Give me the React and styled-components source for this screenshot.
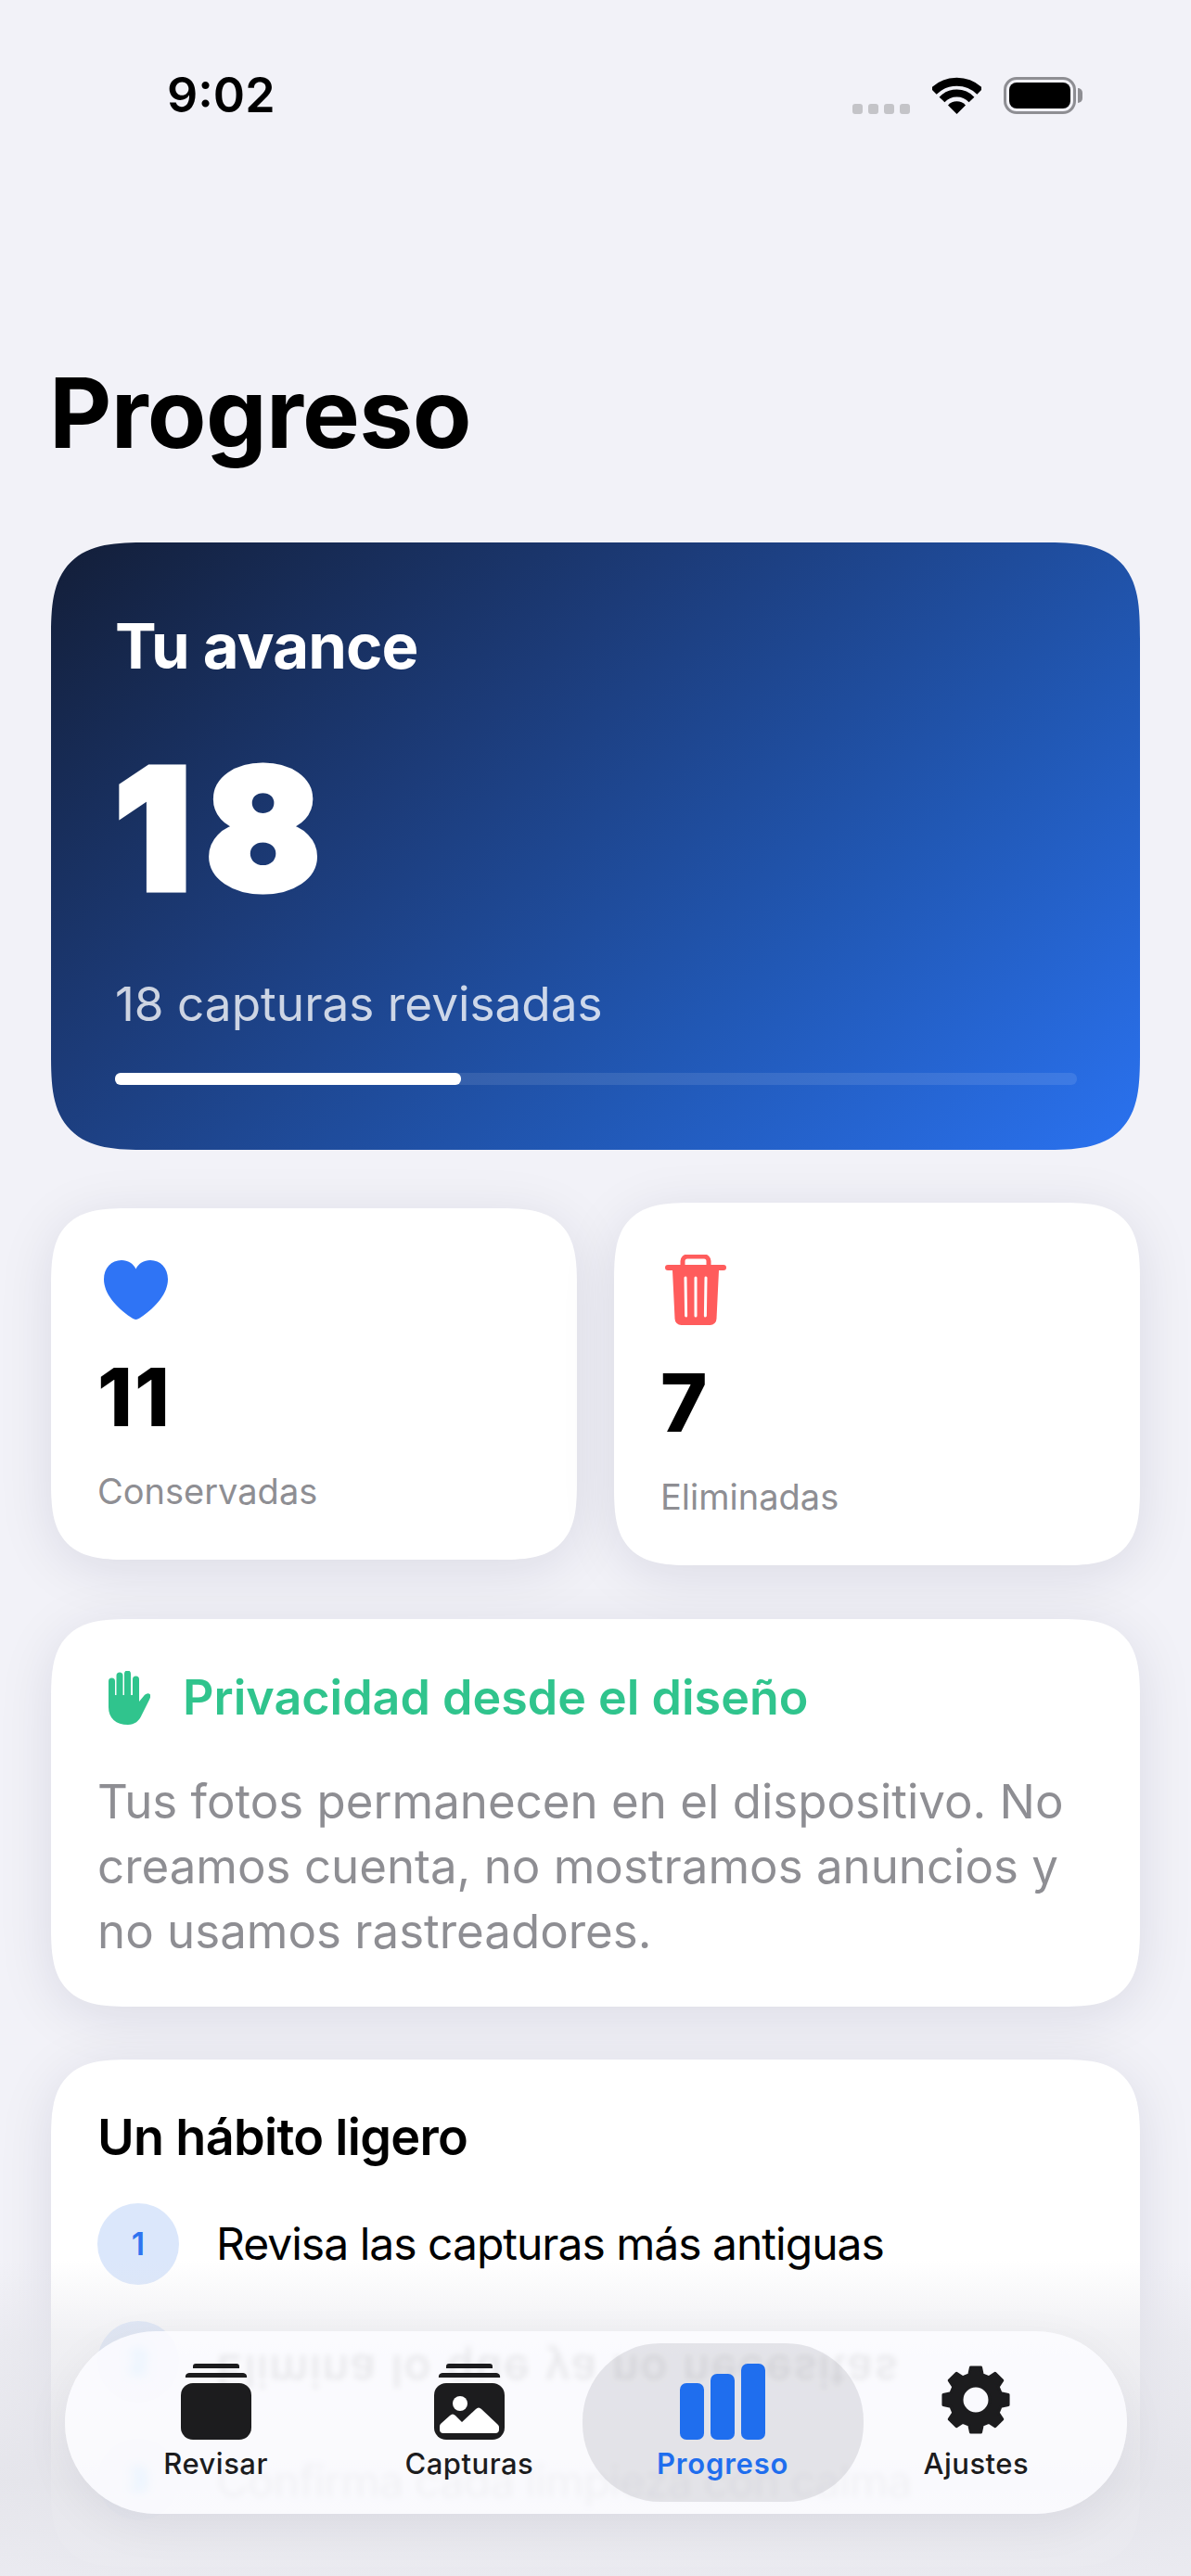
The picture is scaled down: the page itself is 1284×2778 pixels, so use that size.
import React from "react"
import styled, { createGlobalStyle, css } from "styled-components"

const GlobalStyle = createGlobalStyle`
	html, body {
		margin: 0;
		padding: 0;
		background: #f2f2f8;
	}
	* {
		box-sizing: border-box;
	}
`

// continuous iOS corners where the browser can do them
const smoothCorners = (plain, smooth) => css`
	border-radius: ${plain}px;
	@supports (corner-shape: squircle) {
		border-radius: ${smooth}px;
		corner-shape: superellipse(1.6);
	}
`

const Screen = styled.div`
	position: relative;
	width: 1284px;
	height: 2778px;
	overflow: hidden;
	background: #f2f2f8;
	font-family: Inter, "Liberation Sans", sans-serif;
	color: #000;
`

const Content = styled.main`
	display: flex;
	flex-direction: column;
	padding: 0 55px;
`

const StatusBar = styled.header`
	display: flex;
	justify-content: space-between;
	align-items: flex-start;
	height: 383px;
	padding: 73px 69px 0 125px;
`

const Clock = styled.span`
	font-size: 52px;
	line-height: 60px;
	font-weight: 600;
`

const StatusIcons = styled.div`
	display: flex;
	align-items: flex-end;
	margin-top: 10px;
`

const SignalDots = styled.div`
	display: flex;
	gap: 6px;
	margin-right: 24px;
`

const SignalDot = styled.i`
	display: block;
	width: 11px;
	height: 11px;
	border-radius: 3px;
	background: #c4c4c8;
`

const Battery = styled.div`
	position: relative;
	width: 78px;
	height: 40px;
	margin-left: 24px;
	padding: 3px;
	border: 3px solid #8e8e93;
	border-radius: 14px;

	&::before {
		content: "";
		display: block;
		height: 100%;
		border-radius: 8px;
		background: #000;
	}

	&::after {
		content: "";
		position: absolute;
		top: 9px;
		right: -10px;
		width: 5px;
		height: 16px;
		border-radius: 0 6px 6px 0;
		background: #8e8e93;
	}
`

const Title = styled.h1`
	margin: 0 0 78px -2px;
	font-size: 104px;
	line-height: 124px;
	font-weight: 700;
	letter-spacing: -0.7px;
`

const Hero = styled.section`
	padding: 72px 68px 70px 69px;
	${smoothCorners(78, 104)}
	color: #fff;
	background: linear-gradient(140deg, #131e38 0%, #1c3b78 35%, #2158b5 68%, #2a72f0 100%);
`

const HeroLabel = styled.h2`
	margin: 0;
	font-size: 67px;
	line-height: 80px;
	font-weight: 700;
	letter-spacing: -0.9px;
`

const HeroNumber = styled.div`
	margin-top: 62px;
	font-size: 180px;
	line-height: 190px;
	font-weight: 900;
	letter-spacing: 17px;
	-webkit-text-stroke: 7px #fff;
`

const HeroCaption = styled.p`
	margin: 63px 0 0;
	font-size: 51.3px;
	line-height: 60px;
	color: rgba(255, 255, 255, 0.78);
`

const Track = styled.div`
	height: 12.5px;
	margin-top: 45px;
	border-radius: 6px;
	background: rgba(255, 255, 255, 0.1);
`

const Fill = styled.div`
	height: 100%;
	border-radius: 6px;
	background: #fff;
`

const StatGrid = styled.div`
	display: grid;
	grid-template-columns: 1fr 1fr;
	gap: 40px;
	align-items: center;
	margin-top: 57px;
`

const Card = styled.section`
	background: #fff;
	${(p) => smoothCorners(p.$radius || 64, (p.$radius || 64) + 24)}
	box-shadow: 0 10px 60px rgba(20, 20, 60, 0.1);
`

const StatCard = styled(Card)`
	padding: 56px 50px 51px;
`

const StatIcon = styled.svg`
	display: block;
	margin-left: ${(p) => p.$inset}px;
`

const StatNumber = styled.div`
	margin-top: 34px;
	font-size: 86px;
	line-height: 100px;
	font-weight: 800;
	letter-spacing: 2px;
`

const StatLabel = styled.div`
	margin-top: 28px;
	font-size: 38px;
	line-height: 46px;
	color: #8e8e93;
`

const PrivacyCard = styled(Card)`
	margin-top: 58px;
	padding: 54px 50px 46px;
`

const PrivacyHead = styled.div`
	display: flex;
	align-items: center;
	gap: 35px;
	padding-left: 12px;
`

const PrivacyTitle = styled.h3`
	margin: 0;
	font-size: 52px;
	line-height: 62px;
	font-weight: 600;
	color: #30c48d;
`

const PrivacyBody = styled.p`
	margin: 46px 0 0;
	font-size: 51px;
	line-height: 70px;
	color: #8e8e93;
`

const HabitCard = styled(Card)`
	margin-top: 57px;
	padding: 52px 50px 50px;
`

const HabitTitle = styled.h3`
	margin: 0 0 39px;
	font-size: 54px;
	line-height: 64px;
	font-weight: 600;
	letter-spacing: -0.7px;
`

const HabitList = styled.ol`
	display: flex;
	flex-direction: column;
	gap: 39px;
	margin: 0;
	padding: 0;
	list-style: none;
`

const HabitRow = styled.li`
	display: flex;
	align-items: center;
	gap: 40px;
`

const HabitBadge = styled.span`
	display: flex;
	align-items: center;
	justify-content: center;
	flex: none;
	width: 88px;
	height: 88px;
	border-radius: 50%;
	background: #dbe7fb;
`

// rows under the tab bar show through the glass, blurred; the nearest one is flipped too
const behindGlass = css`
	position: relative;
	z-index: 1;
`

const HabitDigit = styled.span`
	font-size: 34px;
	font-weight: 600;
	color: #2f74f0;
	${(p) =>
		p.$glass &&
		css`
			${behindGlass}
			color: #149cf8;
			filter: blur(6px);
		`}
`

const HabitText = styled.span`
	font-size: 48px;
	line-height: 58px;
	letter-spacing: -1px;
	color: #000;
	${(p) =>
		p.$glass === "flipped" &&
		css`
			${behindGlass}
			transform: translateY(10px) scaleY(-1);
			filter: blur(3px);
			letter-spacing: 1.8px;
			opacity: 0.75;
		`}
	${(p) =>
		p.$glass === "faint" &&
		css`
			${behindGlass}
			transform: translateY(2px);
			filter: blur(3px);
			opacity: 0.3;
		`}
`

const BottomFade = styled.div`
	position: absolute;
	left: 0;
	right: 0;
	bottom: 0;
	height: 340px;
	background: linear-gradient(
		180deg,
		rgba(228, 228, 234, 0) 0%,
		rgba(228, 228, 234, 0.55) 25%,
		rgba(228, 228, 234, 0.9) 70%,
		rgba(234, 234, 240, 0.96) 100%
	);
	pointer-events: none;
`

const TabBar = styled.nav`
	position: absolute;
	z-index: 2;
	left: 70px;
	top: 2514px;
	display: grid;
	grid-template-columns: repeat(4, 1fr);
	align-items: center;
	width: 1145px;
	height: 197px;
	padding: 0 26px;
	border-radius: 98px;
	background: rgba(252, 252, 255, 0.88);
	box-shadow: 0 14px 50px rgba(20, 20, 50, 0.06);
`

const Tab = styled.div`
	display: flex;
	flex-direction: column;
	align-items: center;
	justify-content: center;
	height: 171px;
	margin: 0 ${(p) => (p.$active ? -15 : 0)}px;
	border-radius: 84px;
	background: ${(p) => (p.$active ? "rgba(110, 110, 125, 0.16)" : "transparent")};
	color: ${(p) => (p.$active ? "#1f6eee" : "#1c1c1e")};
`

const TabIcon = styled.svg`
	display: block;
	width: ${(p) => p.$width || 76}px;
	height: 82px;
	margin-bottom: 7px;
`

const TabLabel = styled.span`
	font-size: 31px;
	line-height: 38px;
	font-weight: ${(p) => (p.$active ? 600 : 500)};
	letter-spacing: ${(p) => (p.$active ? 0.8 : 0.5)}px;
`

const WifiIcon = () => (
	<svg width="53" height="40" viewBox="0 0 53 40" fill="none">
		<path d="M1.5 15.5A35.5 35.5 0 0 1 51.5 15.5" stroke="#000" strokeWidth="9" />
		<path d="M10.5 24.5A22 22 0 0 1 42.5 24.5" stroke="#000" strokeWidth="8" />
		<path d="M17 30.5A13 13 0 0 1 36 30.5L26.5 40Z" fill="#000" />
	</svg>
)

const HeartIcon = () => (
	<StatIcon $inset={7} width="69" height="64" viewBox="0 0 69 64">
		<path
			d="M34.5 64C33 64 31 63 29 61.5 13 50.500 0 36 0 20.500 0 8.500 8 0 19 0 26 0 31.500 3.500 34.500 9.500 37.500 3.500 43 0 50 0 61 0 69 8.500 69 20.500 69 36 56 50.500 40 61.500 38 63 36 64 34.500 64Z"
			fill="#2f74f5"
		/>
	</StatIcon>
)

const TrashIcon = () => (
	<StatIcon $inset={5} width="66" height="76" viewBox="0 0 66 76">
		<path d="M19 12V7a5 5 0 0 1 5-5h18a5 5 0 0 1 5 5v5" fill="none" stroke="#ff5c5c" strokeWidth="5" />
		<rect x="0" y="11" width="66" height="6" rx="3" fill="#ff5c5c" />
		<path d="M8 17h50l-2.500 52a7 7 0 0 1-7 7h-31a7 7 0 0 1-7-7Z" fill="#ff5c5c" />
		<path d="M22 25l.6 41M33 25v41M44 25l-.6 41" stroke="#fff" strokeWidth="3" strokeLinecap="round" />
	</StatIcon>
)

const HandIcon = () => (
	<svg width="45" height="58" viewBox="0 0 45 58" fill="#30c48d">
		<path
			d="M3.500 11v21M12 5v25M20.500 3v26M29.500 9v21"
			stroke="#30c48d"
			strokeWidth="7"
			strokeLinecap="round"
			fill="none"
		/>
		<path d="M0 26h33v7l5-6c2-2.500 5-3.500 6.500-2s.5 4-.5 6L36 47c-3 7-8 11-15 11C8 58 0 51 0 39Z" />
	</svg>
)

const StackTop = () => (
	<>
		<path d="M16 0h44a3 3 0 0 1 3 3v2H13V3a3 3 0 0 1 3-3Z" fill="currentColor" />
		<path d="M9 10h58a4 4 0 0 1 4 5H5a4 4 0 0 1 4-5Z" fill="currentColor" />
	</>
)

const ReviewIcon = () => (
	<TabIcon viewBox="0 0 76 82">
		<StackTop />
		<rect x="0" y="21" width="76" height="61" rx="13" fill="currentColor" />
	</TabIcon>
)

const PhotosIcon = () => (
	<TabIcon viewBox="0 0 76 82">
		<StackTop />
		<rect x="0" y="21" width="76" height="61" rx="13" fill="currentColor" />
		<circle cx="28" cy="43" r="8" fill="#fff" />
		<path
			d="M6 71v-3c0-1.500.5-2.500 1.500-3.500L17 56c2-2 4-2 6 0l7 7 15-14c2-2 4-2 6 0l18 17c.7.8 1 1.500 1 2.500V71a4 4 0 0 1-4 4H10a4 4 0 0 1-4-4Z"
			fill="#fff"
		/>
	</TabIcon>
)

const BarsIcon = () => (
	<TabIcon $width={92} viewBox="0 0 92 82">
		<rect x="0" y="21" width="26" height="61" rx="7" fill="currentColor" />
		<rect x="33" y="11" width="26" height="71" rx="7" fill="currentColor" />
		<rect x="66" y="0" width="26" height="82" rx="7" fill="currentColor" />
	</TabIcon>
)

const gearPath = (() => {
	const cx = 38
	const cy = 39
	const point = (r, deg) => {
		const a = (deg * Math.PI) / 180
		return `${(cx + r * Math.cos(a)).toFixed(2)} ${(cy + r * Math.sin(a)).toFixed(2)}`
	}
	const parts = []
	for (let i = 0; i < 8; i++) {
		const a = i * 45 - 90
		parts.push(point(28, a - 15), point(35.500, a - 9), point(35.500, a + 9), point(28, a + 15))
	}
	return `M${parts.join("L")}Z M${cx + 15} ${cy}a15 15 0 1 0 -30 0a15 15 0 1 0 30 0Z`
})()

const GearIcon = () => (
	<TabIcon viewBox="0 0 76 82">
		<path
			d={gearPath}
			fill="currentColor"
			fillRule="evenodd"
			stroke="currentColor"
			strokeWidth="3"
			strokeLinejoin="round"
		/>
	</TabIcon>
)

const habits = [
	{ n: 1, text: "Revisa las capturas más antiguas" },
	{ n: 2, text: "Elimina lo que ya no necesitas", glass: "flipped" },
	{ n: 3, text: "Confirma cada limpieza con calma", glass: "faint" }
]

const tabs = [
	{ label: "Revisar", icon: <ReviewIcon /> },
	{ label: "Capturas", icon: <PhotosIcon /> },
	{ label: "Progreso", icon: <BarsIcon />, active: true },
	{ label: "Ajustes", icon: <GearIcon /> }
]

const reviewed = 18
const goal = 50

function App() {
	return (
		<Screen>
			<GlobalStyle />
			<Content>
				<StatusBar>
					<Clock>9:02</Clock>
					<StatusIcons>
						<SignalDots>
							<SignalDot />
							<SignalDot />
							<SignalDot />
							<SignalDot />
						</SignalDots>
						<WifiIcon />
						<Battery />
					</StatusIcons>
				</StatusBar>

				<Title>Progreso</Title>

				<Hero>
					<HeroLabel>Tu avance</HeroLabel>
					<HeroNumber>{reviewed}</HeroNumber>
					<HeroCaption>{reviewed} capturas revisadas</HeroCaption>
					<Track>
						<Fill style={{ width: `${(reviewed / goal) * 100}%` }} />
					</Track>
				</Hero>

				<StatGrid>
					<StatCard $radius={62}>
						<HeartIcon />
						<StatNumber>11</StatNumber>
						<StatLabel>Conservadas</StatLabel>
					</StatCard>
					<StatCard $radius={62}>
						<TrashIcon />
						<StatNumber>7</StatNumber>
						<StatLabel>Eliminadas</StatLabel>
					</StatCard>
				</StatGrid>

				<PrivacyCard>
					<PrivacyHead>
						<HandIcon />
						<PrivacyTitle>Privacidad desde el diseño</PrivacyTitle>
					</PrivacyHead>
					<PrivacyBody>
						Tus fotos permanecen en el dispositivo. No creamos cuenta, no mostramos anuncios y no usamos rastreadores.
					</PrivacyBody>
				</PrivacyCard>

				<HabitCard>
					<HabitTitle>Un hábito ligero</HabitTitle>
					<HabitList>
						{habits.map((h) => (
							<HabitRow key={h.n}>
								<HabitBadge>
									<HabitDigit $glass={h.glass}>{h.n}</HabitDigit>
								</HabitBadge>
								<HabitText $glass={h.glass}>{h.text}</HabitText>
							</HabitRow>
						))}
					</HabitList>
				</HabitCard>
			</Content>

			<BottomFade />

			<TabBar>
				{tabs.map((t) => (
					<Tab key={t.label} $active={t.active}>
						{t.icon}
						<TabLabel $active={t.active}>{t.label}</TabLabel>
					</Tab>
				))}
			</TabBar>
		</Screen>
	)
}

export default App
